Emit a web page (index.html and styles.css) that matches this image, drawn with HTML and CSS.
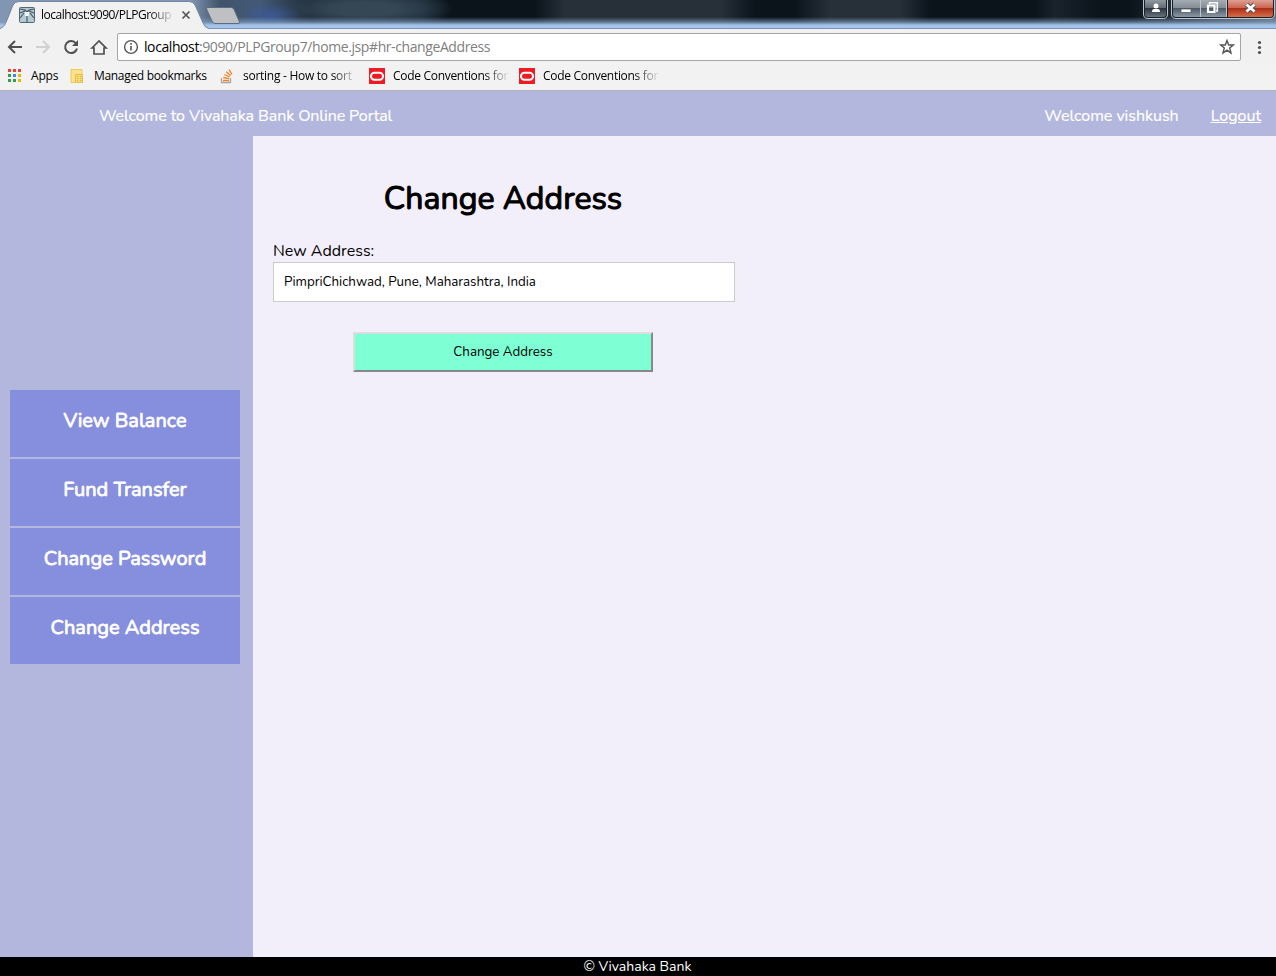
FILE: index.html
```html
<!DOCTYPE html>
<html lang="en">
<head>
<meta charset="utf-8">
<title>localhost:9090/PLPGroup7</title>
<link rel="stylesheet" href="styles.css">
</head>
<body>
<div class="titlebar">
  <svg class="tabs" width="250" height="29" viewBox="0 0 250 29">
    <path d="M0 28.500C4 27 5 25 7 20L13 5Q15 1.500 19 1.500H189Q193 1.500 195 5L203 23Q205 28 209 28.500V29H0Z" fill="#f2f1f2"/>
    <path d="M0 28.500C4 27 5 25 7 20L13 5Q15 1.500 19 1.500H189Q193 1.500 195 5L203 23Q205 28 209 28.500" fill="none" stroke="#7186a1"/>
    <path d="M208 7.500H231Q233 7.500 234 9.500L239.500 22Q240 23.500 238 23.500H215Q213 23.500 212 21L206.500 9Q206 7.500 208 7.500Z" fill="#bfc0c3" stroke="#5c6c80"/>
    <rect x="19.500" y="7.500" width="15" height="15" rx="1" fill="#b5c9d2" stroke="#546873"/>
    <path d="M20 9l5 1 2 2 2-2 5-1M20 13l5-2M34 13l-5-2M27 12v10M24 13l-4 5M30 13l4 5" fill="none" stroke="#405460" stroke-width="1.100"/>
    <path d="M25 12h4v4h-4z" fill="#f4f8f9"/>
    <path d="M182.500 11.500l7 7M189.500 11.500l-7 7" stroke="#555" stroke-width="1.700"/>
  </svg>
  <span class="tab-title fade">localhost:9090/PLPGroup</span>
  <svg class="caption" width="136" height="20" viewBox="0 0 136 20">
    <defs>
      <linearGradient id="glass" x2="0" y2="1"><stop offset="0" stop-color="#9298a0"/><stop offset=".45" stop-color="#646b74"/><stop offset=".46" stop-color="#29313b"/><stop offset="1" stop-color="#687480"/></linearGradient>
      <linearGradient id="grey" x2="0" y2="1"><stop offset="0" stop-color="#a5abb2"/><stop offset=".45" stop-color="#858d96"/><stop offset=".46" stop-color="#4b5663"/><stop offset="1" stop-color="#8c98a5"/></linearGradient>
      <linearGradient id="red" x2="0" y2="1"><stop offset="0" stop-color="#dda092"/><stop offset=".45" stop-color="#cb6650"/><stop offset=".46" stop-color="#ac2814"/><stop offset="1" stop-color="#d56e48"/></linearGradient>
    </defs>
    <path d="M3.500 -1V14Q3.500 18.500 8 18.500H23.500Q27.500 18.500 27.500 14V-1M31.500 -1V14Q31.500 18.500 36 18.500H130Q134.500 18.500 134.500 14V-1" fill="#18212b" stroke="#b9c5d0"/>
    <path d="M5 0H26V14Q26 17 23 17H8Q5 17 5 14Z" fill="url(#glass)"/>
    <path d="M33 0H60V17H36Q33 17 33 14Z" fill="url(#grey)"/>
    <path d="M61 0H86V17H61Z" fill="url(#grey)"/>
    <path d="M88 0H133V14Q133 17 130 17H88Z" fill="url(#red)"/>
    <path d="M60.500 0V17M86.500 0V17" stroke="#bfc6cf"/>
    <circle cx="16" cy="6" r="2.500" fill="#fff"/><path d="M12 12Q12 9 14 9H18Q20 9 20 12Z" fill="#fff"/>
    <rect x="41" y="9" width="10" height="3.500" fill="#fff" stroke="#4a5260" stroke-width=".7"/>
    <path d="M69.500 4V2.800H77.300V11H76" fill="none" stroke="#f7f7f7" stroke-width="1.600"/>
    <path d="M68 5.500H74.500V12H68Z" fill="none" stroke="#fff" stroke-width="2.200"/>
    <path d="M106.500 4.500l8 7M114.500 4.500l-8 7" stroke="#4f5360" stroke-width="4.500"/>
    <path d="M106.500 4.500l8 7M114.500 4.500l-8 7" stroke="#fff" stroke-width="2.700"/>
  </svg>
</div>
<div class="toolbar">
  <svg width="117" height="33" viewBox="0 0 117 33" fill="none" stroke="#505050" stroke-width="2">
    <path d="M22 18H9M15 12L9 18L15 24"/>
    <path d="M36 18H49M43 12L49 18L43 24" stroke="#d0d0d0"/>
    <path d="M76 14.500A6 6 0 1 0 77 19.500"/><path d="M78 11V17H72Z" fill="#505050" stroke="none"/>
    <path d="M92 19L99 12L106 19H104V25H94V19Z" stroke-width="1.700"/>
  </svg>
  <div class="omnibox">
    <svg width="26" height="26" viewBox="0 0 26 26"><circle cx="13" cy="13" r="6.400" fill="none" stroke="#555" stroke-width="1.400"/><path d="M13 12v4.500M13 9v1.700" stroke="#555" stroke-width="1.600"/></svg>
    <span class="url"><b>localhost</b>:9090/PLPGroup7/home.jsp#hr-changeAddress</span>
    <svg class="star" width="16" height="16" viewBox="0 0 16 16"><path d="M8 1.500L9.700 6H14.300L10.700 9L12 14L8 11.200L4 14L5.300 9L1.700 6H6.300Z" fill="none" stroke="#555" stroke-width="1.400"/></svg>
  </div>
  <svg class="menu" width="35" height="33" viewBox="0 0 35 33" fill="#505050"><circle cx="18.500" cy="13.500" r="1.600"/><circle cx="18.500" cy="18.500" r="1.600"/><circle cx="18.500" cy="23.500" r="1.600"/></svg>
</div>
<div class="bookmarks">
  <svg width="16" height="16" viewBox="0 0 16 16"><path d="M1 1h3v3H1zM6 1h3v3H6zM11 1h3v3h-3z" fill="#ea4335"/><path d="M1 6h3v3H1zM1 11h3v3H1z" fill="#2f9e52"/><path d="M6 6h3v3H6z" fill="#4285f4"/><path d="M6 11h3v3H6z" fill="#2f9e52"/><path d="M11 6h3v3h-3zM11 11h3v3h-3z" fill="#f4b400"/></svg>
  <span class="bm apps">Apps</span>
  <svg class="folder" width="16" height="16" viewBox="0 0 16 16"><path d="M1 1.500H12V14.500H1Z" fill="#fce28b" stroke="#eac85b"/><path d="M5.500 6.500H12.500V14.500H5.500Z" fill="#f9da78" stroke="#e3bf4c"/><path d="M7 8.500h1.500M10 8.500h1.500M7 10.500h1.500M10 10.500h1.500M7 12.500h1.500M10 12.500h1.500" stroke="#e0b740"/></svg>
  <span class="bm managed">Managed bookmarks</span>
  <svg width="16" height="16" viewBox="0 0 16 16" fill="none"><path d="M2.500 10V14.500H11.500V10" stroke="#a6a6a6" stroke-width="1.300"/><path d="M4 12.500H10M4.300 9.500L10.200 10.700M5.300 6.500L10.700 9M7.200 3.700L11.700 7.500M10 1.500L13 6.300" stroke="#f48024" stroke-width="1.300"/></svg>
  <span class="bm sort fade">sorting - How to sort</span>
  <svg width="16" height="16" viewBox="0 0 16 16"><path d="M0 0H16V16H0Z" fill="#ed1c24"/><rect x="2" y="4.700" width="12" height="7" rx="3.500" fill="none" stroke="#fff" stroke-width="2"/></svg>
  <span class="bm code fade">Code Conventions for</span>
  <svg width="16" height="16" viewBox="0 0 16 16"><path d="M0 0H16V16H0Z" fill="#ed1c24"/><rect x="2" y="4.700" width="12" height="7" rx="3.500" fill="none" stroke="#fff" stroke-width="2"/></svg>
  <span class="bm code fade">Code Conventions for</span>
</div>
<header class="header">
  <span class="brand">Welcome to Vivahaka Bank Online Portal</span>
  <span class="user">Welcome vishkush</span>
  <a class="logout" href="#">Logout</a>
</header>
<div class="page">
  <nav class="sidebar">
    <a class="item">View Balance</a>
    <a class="item">Fund Transfer</a>
    <a class="item">Change Password</a>
    <a class="item">Change Address</a>
  </nav>
  <main class="content">
    <h1 class="title">Change Address</h1>
    <label class="label">New Address:</label>
    <div class="field">PimpriChichwad, Pune, Maharashtra, India</div>
    <button class="submit">Change Address</button>
  </main>
</div>
<footer class="footer">© Vivahaka Bank</footer>
</body>
</html>
```
FILE: styles.css
```css
* { box-sizing: border-box; }
body {
  margin: 0;
  width: 1276px;
  height: 976px;
  overflow: hidden;
  display: flex;
  flex-direction: column;
  font-family: Nunito, Lato, "Open Sans", sans-serif;
  font-size: 16px;
  background: #f3effa;
}
svg { display: block; flex: none; }
.titlebar, .toolbar, .bookmarks { font-family: "Segoe UI", "Open Sans", sans-serif; flex: none; }
.titlebar {
  position: relative;
  height: 29px;
  border-bottom: 1px solid #7893bb;
  background:
    linear-gradient(180deg, transparent 17px, rgba(126,154,187,.65) 22px, #a2c1e6 25px, #a9c8ec 28px),
    radial-gradient(ellipse 30px 13px at 270px 16px, #3d5893, transparent),
    radial-gradient(ellipse 90px 19px at 365px 9px, #354654 35%, transparent),
    linear-gradient(90deg, #8295b2 0, #8295b2 190px, #40546b 220px, #435a77 260px, #1c2b3a 310px, #1b2a38 420px, #0b131b 450px, #0b131b 535px, #272f39 565px, #272f39 720px, #0b131b 755px, #0b131b 795px, #272f39 830px, #272f39 900px, #0b131b 930px, #0b131b 1035px, #1a222c 1055px, #0b131b 1100px, #0b131b 1130px, #66727f 1276px);
}
.tabs { position: absolute; left: 0; top: 0; }
.caption { position: absolute; right: 0; top: 0; }
.tab-title {
  position: absolute;
  left: 41px;
  top: 6px;
  width: 134px;
  font-size: 12px;
  line-height: 18px;
  letter-spacing: -.5px;
}
.fade {
  white-space: nowrap;
  -webkit-mask-image: linear-gradient(90deg, #000 calc(100% - 26px), transparent);
  mask-image: linear-gradient(90deg, #000 calc(100% - 26px), transparent);
}
.toolbar { display: flex; height: 33px; background: #f2f1f2; }
.omnibox {
  display: flex;
  align-items: center;
  width: 1124px;
  height: 28px;
  margin-top: 4px;
  background: #fff;
  border: 1px solid #a6a6a6;
  border-radius: 2px;
}
.url { flex: 1; font-size: 14px; line-height: 20px; color: #808080; letter-spacing: -.41px; }
.url b { font-weight: 400; color: #000; }
.star { margin-right: 5px; }
.bookmarks {
  display: flex;
  align-items: center;
  height: 29px;
  padding: 0 0 1px 7px;
  font-size: 12px;
  background: #f2f2f2;
  border-bottom: 1px solid #b3b3b3;
}
.bm { flex: none; margin-left: 8px; line-height: 18px; white-space: nowrap; }
.apps { width: 39px; letter-spacing: -.2px; }
.managed { width: 125px; letter-spacing: -.32px; }
.sort { width: 115px; margin-right: 11px; letter-spacing: -.27px; }
.code { width: 117px; margin-right: 9px; letter-spacing: -.3px; }
.header {
  display: flex;
  align-items: center;
  flex: none;
  height: 45px;
  padding: 4px 15px 0 99px;
  color: #fff;
  background: #b3b6dd;
  -webkit-text-stroke: .2px #fff;
}
.brand { flex: 1; letter-spacing: -.08px; }
.user { margin-right: 32px; letter-spacing: -.03px; }
.logout { color: #fff; }
.page { flex: 1; display: flex; }
.sidebar {
  display: flex;
  flex-direction: column;
  gap: 2px;
  width: 253px;
  padding: 254px 13px 0 10px;
  background: #b3b6dd;
}
.item {
  height: 67px;
  padding-top: 17px;
  color: #fff;
  background: #868ede;
  text-align: center;
  font-size: 20px;
  -webkit-text-stroke: .8px #fff;
  line-height: 27px;
}
.content { width: 502px; padding: 41px 20px 0; }
.title {
  margin: 0 0 19px;
  font-size: 32px;
  line-height: 44px;
  font-weight: 400;
  -webkit-text-stroke: 1.1px #000;
  text-align: center;
  width: 460px;
  white-space: nowrap;
}
.label { display: block; line-height: 22px; }
.field {
  width: 462px;
  height: 40px;
  padding: 0 10px;
  border: 1px solid #ccc;
  background: #fff;
  font-size: 13.333px;
  line-height: 38px;
}
.submit {
  display: block;
  width: 300px;
  height: 40px;
  margin: 30px 0 0 80px;
  padding: 0;
  border: 2px solid;
  border-color: #ddd #888 #888 #ddd;
  background: #7fffd4;
  color: #000;
  font-family: inherit;
  font-size: 13.333px;
}
.footer {
  flex: none;
  height: 19px;
  padding-right: 1px;
  background: #000;
  color: #fff;
  font-size: 14px;
  line-height: 19px;
  text-align: center;
}
```
